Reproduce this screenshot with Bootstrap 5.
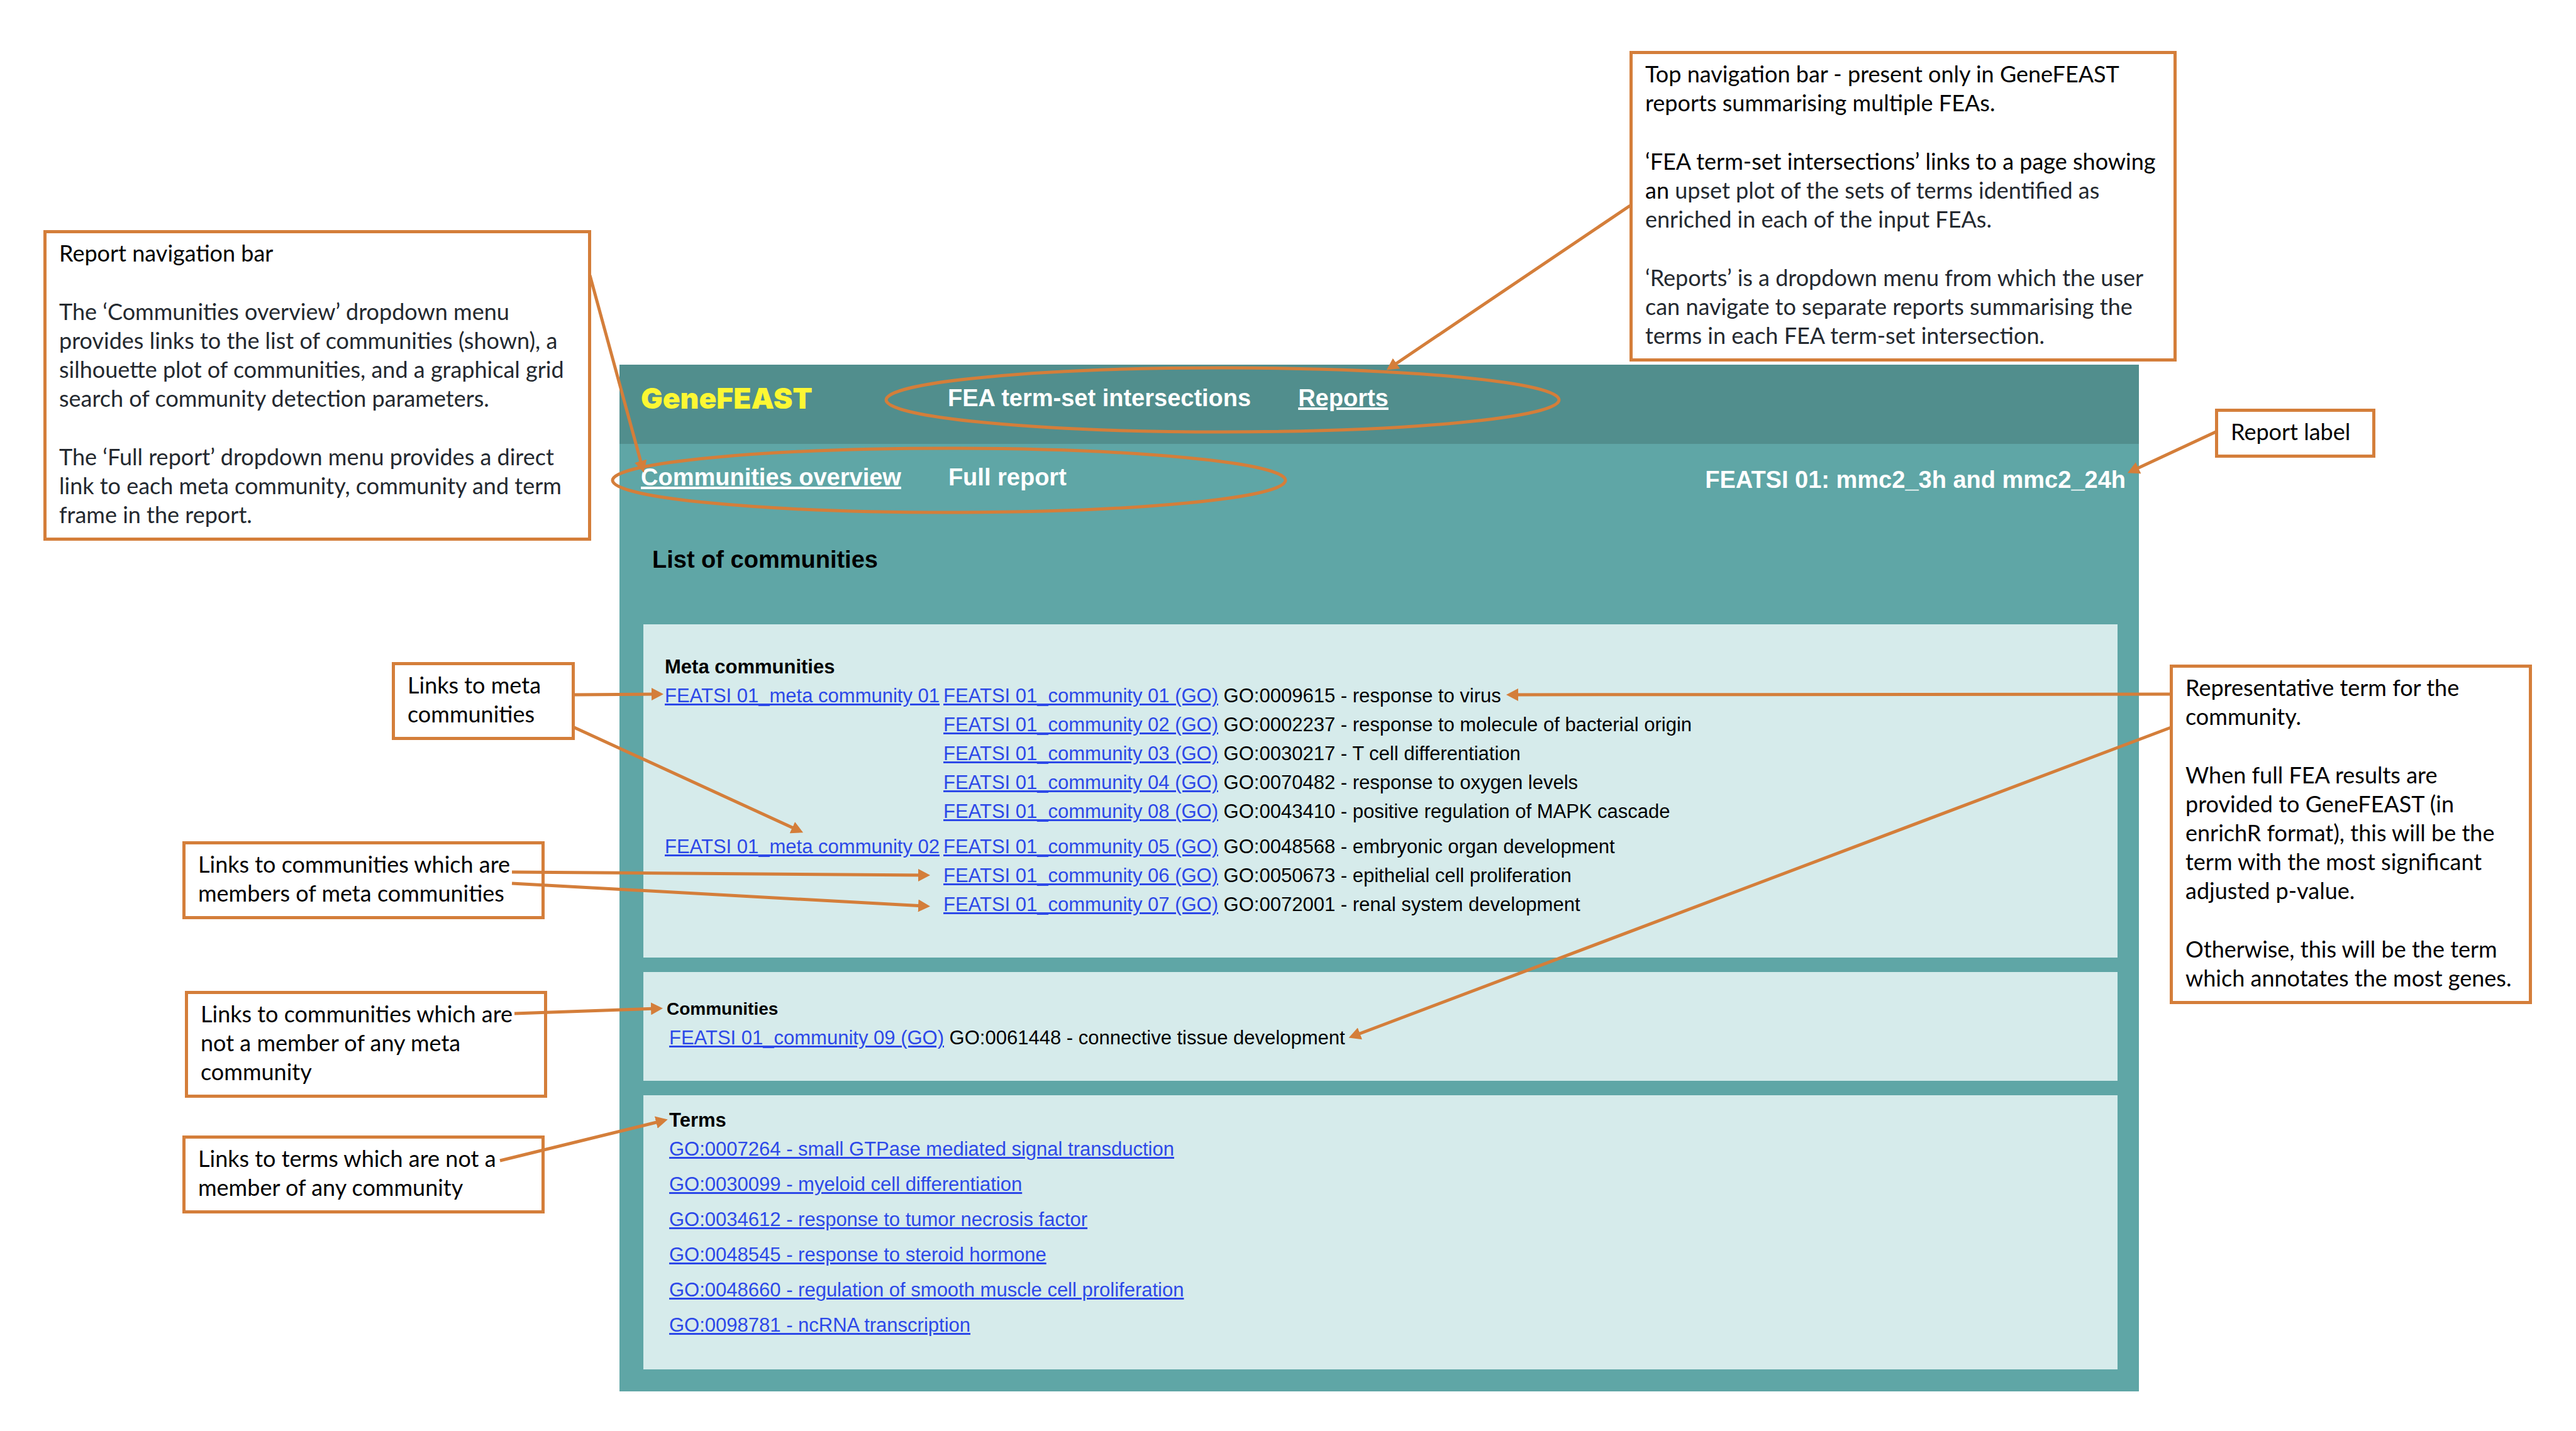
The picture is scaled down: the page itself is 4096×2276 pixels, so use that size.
<!DOCTYPE html>
<html lang="en">
<head>
<meta charset="utf-8">
<meta name="viewport" content="width=device-width, initial-scale=1">
<title>GeneFEAST report guide</title>
<link href="https://cdn.jsdelivr.net/npm/bootstrap@5.3.0/dist/css/bootstrap.min.css" rel="stylesheet">
<style>
  :root { --guide: #d47e3a; --teal: #5fa6a6; --teal-dark: #518e8d; --pale: #d6ebeb; --link: #2c48e8; }
  body { background: #fff; color: #000; font-family: "Liberation Sans", Arial, sans-serif; font-size: 31px; line-height: 46px; }
  .guide { min-height: 100vh; padding: 580px 695px 64px 985px; }

  /* report window */
  .report { background: var(--teal); }
  .bar { padding: 30px 21px 50px 34px; font-size: 38px; font-weight: 700; }
  .bar-top { background: var(--teal-dark); }
  .bar-report { padding-bottom: 46px; }
  .bar a, .bar span { color: #fff; text-decoration: none; white-space: nowrap; }
  .bar a.current { text-decoration: underline; text-decoration-thickness: 4px; }
  .bar-links { gap: 75px; }
  .bar-links > :first-child { min-width: 413px; }
  .bar a.brand { color: #fdf733; font-family: Inter, "Liberation Sans", sans-serif; font-weight: 900; font-size: 46px; }
  .report h1 { font-size: 38px; line-height: 46px; font-weight: 700; padding: 35px 52px 80px; margin: 0; }
  .panels { padding: 0 34px 35px 38px; gap: 23px; }
  .panel { background: var(--pale); }
  .panel h2 { font-size: 31px; line-height: 46px; font-weight: 700; margin: 0; }
  .panel a { color: var(--link); text-decoration: underline; text-decoration-thickness: 3px; }
  .panel-meta { padding: 45px 34px 61px; }
  .panel-single { padding: 36px 37px 45px; }
  .panel-single h2 { font-size: 28px; }
  .panel-single p { padding-left: 4px; }
  .panel-terms { padding: 17px 41px 47px; }
  .meta-group + .meta-group { margin-top: 10px; }
  .meta-name { flex: 0 0 443px; }
  .term-list { gap: 10px; }

  /* callouts pinned on the guide canvas */
  .callout { position: absolute; border: 5px solid var(--guide); background: #fff; padding: 8px 20px 14px; font-family: Lato, sans-serif; font-size: 36px; line-height: 46px; white-space: nowrap; }
  .callout p { margin: 0; }
  .callout p + p { margin-top: 47px; }
  .ink { color: #24292f; }
  #c-report-nav { left: 69px; top: 366px; width: 871px; }
  #c-top-nav { right: 635px; top: 81px; width: 870px; }
  #c-label { right: 319px; top: 650px; width: 255px; }
  #c-meta { left: 623px; top: 1053px; width: 291px; }
  #c-members { left: 290px; top: 1338px; width: 576px; }
  #c-single { left: 294px; top: 1576px; width: 576px; }
  #c-terms { left: 290px; top: 1806px; width: 576px; }
  #c-rep { right: 70px; top: 1057px; width: 576px; }
  .arrows { position: absolute; left: 0; top: 0; width: 100%; pointer-events: none; }
</style>
</head>
<body>
<div class="guide position-relative">
  <main class="report">
    <nav class="bar bar-top d-flex" aria-label="Top navigation">
      <div class="bar-links d-flex">
        <a class="brand" href="#">GeneFEAST</a>
        <a href="#">FEA term-set intersections</a>
        <a class="current" href="#">Reports</a>
      </div>
    </nav>
    <nav class="bar bar-report d-flex justify-content-between" aria-label="Report navigation">
      <div class="bar-links d-flex">
        <a class="current" href="#">Communities overview</a>
        <a href="#">Full report</a>
      </div>
      <span class="pt-1">FEATSI 01: mmc2_3h and mmc2_24h</span>
    </nav>
    <h1>List of communities</h1>
    <div class="panels d-flex flex-column">
      <section class="panel panel-meta">
        <h2>Meta communities</h2>
        <div class="meta-group d-flex">
          <div class="meta-name"><a href="#">FEATSI 01_meta community 01</a></div>
          <ul class="list-unstyled mb-0">
            <li><a href="#">FEATSI 01_community 01 (GO)</a> GO:0009615 - response to virus</li>
            <li><a href="#">FEATSI 01_community 02 (GO)</a> GO:0002237 - response to molecule of bacterial origin</li>
            <li><a href="#">FEATSI 01_community 03 (GO)</a> GO:0030217 - T cell differentiation</li>
            <li><a href="#">FEATSI 01_community 04 (GO)</a> GO:0070482 - response to oxygen levels</li>
            <li><a href="#">FEATSI 01_community 08 (GO)</a> GO:0043410 - positive regulation of MAPK cascade</li>
          </ul>
        </div>
        <div class="meta-group d-flex">
          <div class="meta-name"><a href="#">FEATSI 01_meta community 02</a></div>
          <ul class="list-unstyled mb-0">
            <li><a href="#">FEATSI 01_community 05 (GO)</a> GO:0048568 - embryonic organ development</li>
            <li><a href="#">FEATSI 01_community 06 (GO)</a> GO:0050673 - epithelial cell proliferation</li>
            <li><a href="#">FEATSI 01_community 07 (GO)</a> GO:0072001 - renal system development</li>
          </ul>
        </div>
      </section>
      <section class="panel panel-single">
        <h2>Communities</h2>
        <p class="mb-0"><a href="#">FEATSI 01_community 09 (GO)</a> GO:0061448 - connective tissue development</p>
      </section>
      <section class="panel panel-terms">
        <h2>Terms</h2>
        <ul class="term-list list-unstyled mb-0 d-flex flex-column">
          <li><a href="#">GO:0007264 - small GTPase mediated signal transduction</a></li>
          <li><a href="#">GO:0030099 - myeloid cell differentiation</a></li>
          <li><a href="#">GO:0034612 - response to tumor necrosis factor</a></li>
          <li><a href="#">GO:0048545 - response to steroid hormone</a></li>
          <li><a href="#">GO:0048660 - regulation of smooth muscle cell proliferation</a></li>
          <li><a href="#">GO:0098781 - ncRNA transcription</a></li>
        </ul>
      </section>
    </div>
  </main>

  <aside class="callout" id="c-report-nav">
    <p>Report navigation bar</p>
    <p class="ink">The ‘Communities overview’ dropdown menu<br>provides links to the list of communities (shown), a<br>silhouette plot of communities, and a graphical grid<br>search of community detection parameters.</p>
    <p class="ink">The ‘Full report’ dropdown menu provides a direct<br>link to each meta community, community and term<br>frame in the report.</p>
  </aside>
  <aside class="callout" id="c-top-nav">
    <p>Top navigation bar - present only in GeneFEAST<br>reports summarising multiple FEAs.</p>
    <p>‘FEA term-set intersections’ links to a page showing<br>an <span class="ink">upset plot of the sets of terms identified as<br>enriched in each of the input FEAs.</span></p>
    <p class="ink">‘Reports’ is a dropdown menu from which the user<br>can navigate to separate reports summarising the<br>terms in each FEA term-set intersection.</p>
  </aside>
  <aside class="callout" id="c-label"><p>Report label</p></aside>
  <aside class="callout" id="c-meta"><p>Links to meta<br>communities</p></aside>
  <aside class="callout" id="c-members"><p>Links to communities which are<br>members of meta communities</p></aside>
  <aside class="callout" id="c-single"><p>Links to communities which are<br>not a member of any meta<br>community</p></aside>
  <aside class="callout" id="c-terms"><p>Links to terms which are not a<br>member of any community</p></aside>
  <aside class="callout" id="c-rep">
    <p>Representative term for the<br>community.</p>
    <p>When full FEA results are<br>provided to GeneFEAST (in<br>enrichR format), this will be the<br>term with the most significant<br>adjusted p-value.</p>
    <p>Otherwise, this will be the term<br>which annotates the most genes.</p>
  </aside>

  <svg class="arrows" viewBox="0 0 4096 2276" fill="none" stroke="#d47e3a" stroke-width="5" aria-hidden="true">
    <defs>
      <marker id="head" markerUnits="userSpaceOnUse" markerWidth="20" markerHeight="20" refX="9" refY="10" orient="auto">
        <path d="M0 0 L19 10 L0 20 Z" fill="#d47e3a" stroke="none"/>
      </marker>
    </defs>
    <ellipse cx="1944" cy="636" rx="535" ry="51"/>
    <ellipse cx="1509" cy="764" rx="535" ry="51"/>
    <g marker-end="url(#head)">
      <path d="M938 438 L1021 742"/>
      <path d="M2592 327 L2213 583"/>
      <path d="M3523 687 L3392 748"/>
      <path d="M913 1105 L1045 1104"/>
      <path d="M913 1157 L1268 1320"/>
      <path d="M814 1387 L1469 1392"/>
      <path d="M814 1405 L1469 1441"/>
      <path d="M818 1612 L1044 1604"/>
      <path d="M795 1846 L1052 1783"/>
      <path d="M3452 1104 L2405 1105"/>
      <path d="M3452 1157 L2154 1647"/>
    </g>
  </svg>
</div>
<script src="https://cdn.jsdelivr.net/npm/bootstrap@5.3.0/dist/js/bootstrap.bundle.min.js"></script>
</body>
</html>
